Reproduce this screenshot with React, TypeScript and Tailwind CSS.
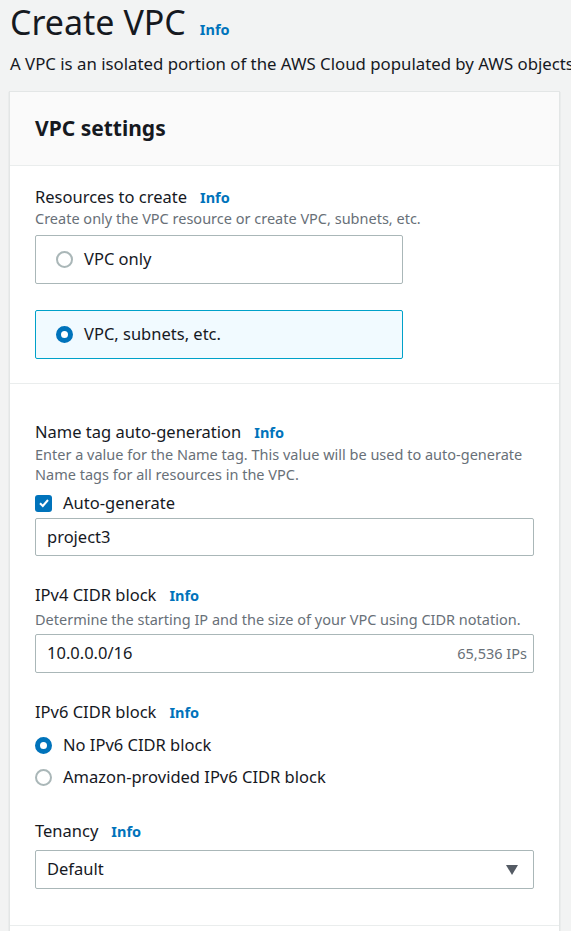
import React from "react";

function Info() {
  return <span className="text-[14.5px] font-bold text-[#0073bb]">Info</span>;
}

function Radio({ checked }: { checked?: boolean }) {
  return checked ? (
    <span className="box-border inline-block h-[17px] w-[17px] shrink-0 rounded-full border-[5px] border-[#0073bb] bg-white" />
  ) : (
    <span className="box-border inline-block h-[17px] w-[17px] shrink-0 rounded-full border-2 border-[#aab7b8] bg-white" />
  );
}

function Label({ children }: { children: React.ReactNode }) {
  return (
    <div className="flex h-[22px] items-baseline gap-[13px] overflow-visible text-[16.5px] leading-[22px] text-[#16191f]">
      <span>{children}</span>
      <Info />
    </div>
  );
}

export default function App() {
  return (
    <div
      className="min-h-screen overflow-hidden bg-[#f2f3f3] text-[#16191f]"
      style={{ fontFamily: "'Noto Sans', 'Open Sans', sans-serif" }}
    >
      <div className="flex h-[45px] items-baseline gap-[14px] pl-[10px]">
        <h1 className="text-[34px] leading-[44px]">Create VPC</h1>
        <Info />
      </div>
      <p className="mt-[8px] h-[22px] whitespace-nowrap pl-[10px] text-[16.8px] leading-[22px]">
        A VPC is an isolated portion of the AWS Cloud populated by AWS objects, such as Amazon EC2 instances.
      </p>

      <div className="ml-[9px] mt-[16px] w-[551px] border border-[#e3e6e6] bg-white shadow-[0_1px_1px_rgba(0,28,36,0.2)]">
        <div className="flex h-[74px] items-center border-b border-[#eaeded] bg-[#fafafa] px-[25px]">
          <h2 className="text-[21px] font-bold">VPC settings</h2>
        </div>

        <div className="border-b border-[#eaeded] px-[25px] pb-[24px] pt-[20px]">
          <Label>Resources to create</Label>
          <p className="h-[20px] text-[14.5px] leading-[20px] text-[#687078]">
            Create only the VPC resource or create VPC, subnets, etc.
          </p>
          <div className="mt-[7px] flex w-[368px] flex-col gap-[26px]">
            <div className="flex h-[49px] items-center gap-[11px] rounded-[2px] border border-[#aab7b8] px-[20px] text-[16.5px]">
              <Radio />
              <span>VPC only</span>
            </div>
            <div className="flex h-[49px] items-center gap-[11px] rounded-[2px] border border-[#00a1c9] bg-[#f1faff] px-[20px] text-[16.5px]">
              <Radio checked />
              <span>VPC, subnets, etc.</span>
            </div>
          </div>
        </div>

        <div className="border-b border-[#eaeded] px-[25px] pb-[36px] pt-[37px]">
          <Label>Name tag auto-generation</Label>
          <p className="mt-[2px] text-[14.5px] leading-[19.5px] text-[#687078]">
            Enter a value for the Name tag. This value will be used to auto-generate Name tags for all resources in the VPC.
          </p>
          <div className="mt-[8px] flex h-[22px] items-center gap-[11px] text-[16.5px]">
            <span className="flex h-[17px] w-[17px] items-center justify-center rounded-[3px] bg-[#0073bb]">
              <svg width="12" height="12" viewBox="0 0 12 12" fill="none">
                <path d="M2 6.2 4.8 9 10 3" stroke="white" strokeWidth="2" />
              </svg>
            </span>
            <span>Auto-generate</span>
          </div>
          <div className="mt-[4px] flex h-[38px] items-center rounded-[2px] border border-[#aab7b8] px-[11px] text-[16.5px]">
            project3
          </div>

          <div className="mt-[28px]">
            <Label>IPv4 CIDR block</Label>
          </div>
          <p className="mt-[3px] h-[20px] text-[14.5px] leading-[20px] text-[#687078]">
            Determine the starting IP and the size of your VPC using CIDR notation.
          </p>
          <div className="mt-[5px] flex h-[39px] items-center justify-between rounded-[2px] border border-[#aab7b8] pl-[11px] pr-[6px] text-[16.5px]">
            <span>10.0.0.0/16</span>
            <span className="text-[14.5px] text-[#687078]">65,536 IPs</span>
          </div>

          <div className="mt-[28px]">
            <Label>IPv6 CIDR block</Label>
          </div>
          <div className="mt-[11px] flex flex-col gap-[10px] text-[16.5px]">
            <div className="flex h-[22px] items-center gap-[11px]">
              <Radio checked />
              <span>No IPv6 CIDR block</span>
            </div>
            <div className="flex h-[22px] items-center gap-[11px]">
              <Radio />
              <span>Amazon-provided IPv6 CIDR block</span>
            </div>
          </div>

          <div className="mt-[32px]">
            <Label>Tenancy</Label>
          </div>
          <div className="mt-[8px] flex h-[39px] items-center justify-between rounded-[2px] border border-[#aab7b8] pl-[11px] pr-[15px] text-[16.5px]">
            <span>Default</span>
            <svg width="12" height="10" viewBox="0 0 12 10">
              <path d="M0 0h12L6 10z" fill="#545b64" />
            </svg>
          </div>
        </div>
        <div className="h-[40px]" />
      </div>
    </div>
  );
}
